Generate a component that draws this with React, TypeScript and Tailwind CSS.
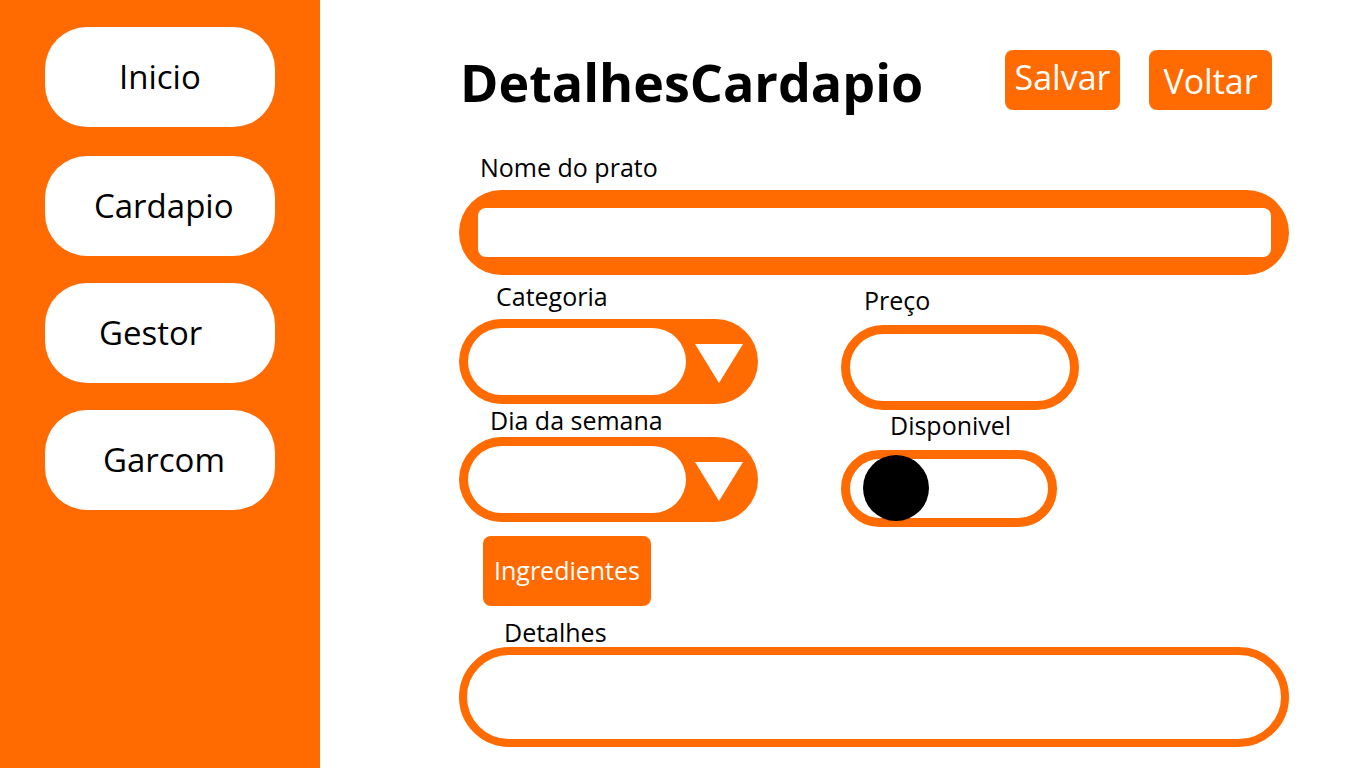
import React from "react";

const menu = [
  { label: "Inicio", cls: "mt-[27px] pl-[74px]" },
  { label: "Cardapio", cls: "mt-[29px] pl-[49px]" },
  { label: "Gestor", cls: "mt-[27px] pl-[54px]" },
  { label: "Garcom", cls: "mt-[27px] pl-[58px]" },
];

const Triangle: React.FC = () => (
  <svg width="48" height="39" viewBox="0 0 48 39" className="shrink-0">
    <polygon points="0,0 48,0 24,39" fill="#ffffff" />
  </svg>
);

const Select: React.FC = () => (
  <div className="flex h-[85px] w-[299px] items-center rounded-full bg-[#ff6b00] pl-[9px]">
    <div className="h-[67px] w-[218px] rounded-full bg-white" />
    <div className="ml-[9px] mt-[4px]">
      <Triangle />
    </div>
  </div>
);

const Label: React.FC<{ text: string; className?: string }> = ({ text, className }) => (
  <div className={"h-[24px] text-[25px] leading-[24px] text-black " + (className ?? "")}>{text}</div>
);

const App: React.FC = () => {
  return (
    <div className="flex h-[768px] w-[1366px] overflow-hidden bg-white font-['Open_Sans',sans-serif]">
      {/* sidebar */}
      <div className="flex h-full w-[320px] shrink-0 flex-col bg-[#ff6b00] pl-[45px]">
        {menu.map(item => (
          <div
            key={item.label}
            className={"flex h-[100px] w-[230px] items-center rounded-[42px] bg-white text-[33px] text-black " + item.cls}>
            {item.label}
          </div>
        ))}
      </div>

      {/* content */}
      <div className="flex w-[830px] flex-col pl-[139px] box-content">
        <div className="mt-[50px] flex h-[60px] items-center">
          <h1 className="ml-[1px] mt-[4px] text-[52px] font-bold leading-[60px] text-black">
            DetalhesCardapio
          </h1>
          <button className="ml-auto flex h-[60px] w-[115px] items-center justify-center rounded-[8px] bg-[#ff6b00] pb-[6px] text-[34px] text-white">
            Salvar
          </button>
          <button className="ml-[29px] mr-[17px] flex h-[60px] w-[123px] items-center justify-center rounded-[8px] bg-[#ff6b00] pt-[2px] text-[34px] text-white">
            Voltar
          </button>
        </div>

        <Label text="Nome do prato" className="ml-[21px] mt-[45px]" />
        <div className="mt-[11px] flex h-[85px] w-[830px] rounded-full bg-[#ff6b00] pb-[18px] pl-[19px] pr-[18px] pt-[18px]">
          <div className="h-full w-full rounded-[8px] bg-white" />
        </div>

        <div className="flex">
          <div className="flex w-[382px] flex-col">
            <Label text="Categoria" className="ml-[37px] mt-[9px]" />
            <div className="mt-[11px]">
              <Select />
            </div>
            <Label text="Dia da semana" className="ml-[31px] mt-[4px]" />
            <div className="mt-[5px]">
              <Select />
            </div>
          </div>
          <div className="flex flex-col">
            <Label text="Preço" className="ml-[23px] mt-[13px]" />
            <div className="mt-[13px] h-[85px] w-[238px] rounded-full border-[9px] border-[#ff6b00] bg-white" />
            <Label text="Disponivel" className="ml-[49px] mt-[3px]" />
            <div className="relative mt-[13px] h-[77px] w-[216px] rounded-full border-[9px] border-[#ff6b00] bg-white">
              <div className="absolute left-[13px] top-[-4px] h-[66px] w-[66px] rounded-full bg-black" />
            </div>
          </div>
        </div>

        <button className="ml-[24px] mt-[9px] flex h-[70px] w-[168px] items-center justify-center rounded-[8px] bg-[#ff6b00] text-[25px] text-white">
          Ingredientes
        </button>

        <Label text="Detalhes" className="ml-[45px] mt-[14px]" />
        <div className="mt-[3px] h-[100px] w-[830px] rounded-full border-[8px] border-[#ff6b00] bg-white" />
      </div>
    </div>
  );
};

export default App;
